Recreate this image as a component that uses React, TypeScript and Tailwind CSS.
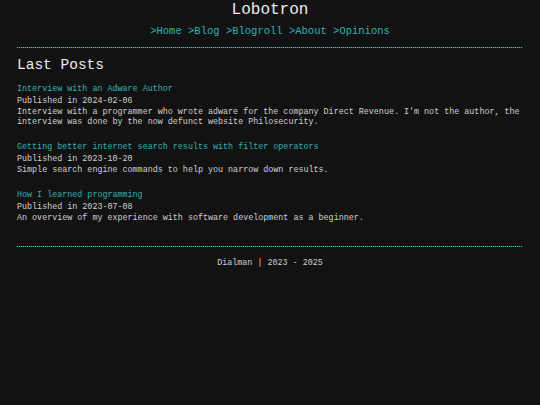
const posts = [
  {
    title: 'Interview with an Adware Author',
    date: '2024-02-06',
    summary:
      "Interview with a programmer who wrote adware for the company Direct Revenue. I'm not the author, the interview was done by the now defunct website Philosecurity.",
  },
  {
    title: 'Getting better internet search results with filter operators',
    date: '2023-10-20',
    summary: 'Simple search engine commands to help you narrow down results.',
  },
  {
    title: 'How I learned programming',
    date: '2023-07-08',
    summary: 'An overview of my experience with software development as a beginner.',
  },
];

const navLinks = ['Home', 'Blog', 'Blogroll', 'About', 'Opinions'];

// dotted teal rule between sections
function Rule({ className = '' }: { className?: string }) {
  return (
    <div
      className={`h-px bg-[repeating-linear-gradient(to_right,#3fd2d2_0_1px,#1a3a3a_1px_2px)] ${className}`}
    />
  );
}

export default function App() {
  return (
    <div className="min-h-[405px] bg-[#121212] px-[17px] font-['Liberation_Mono',monospace] text-[#d0d0d0]">
      <header className="flex flex-col items-center">
        <h1 className="text-[16px] leading-[20px] text-[#ececec]">Lobotron</h1>
        <nav className="mt-[4px] whitespace-pre text-[10.5px] leading-[14px] text-[#2fb3b3]">
          {navLinks.map((l, i) => (
            <span key={l}>
              {i > 0 && ' '}
              <a href="#">&gt;{l}</a>
            </span>
          ))}
        </nav>
      </header>

      <Rule className="mt-[9px]" />

      <main>
        <h2 className="mt-[8px] text-[14.5px] leading-[18px] text-[#ececec]">Last Posts</h2>
        <ul className="mt-[9px] flex flex-col gap-[14px]">
          {posts.map((p) => (
            <li key={p.title} className="text-[8.4px] leading-[10px]">
              <a href="#" className="block leading-[12px] text-[#2fb3b3]">
                {p.title}
              </a>
              <div className="leading-[12px]">Published in {p.date}</div>
              <p>{p.summary}</p>
            </li>
          ))}
        </ul>
      </main>

      <Rule className="mt-[23px]" />

      <footer className="mt-[10px] text-center text-[8.4px] leading-[12px]">Dialman | 2023 - 2025</footer>
    </div>
  );
}
